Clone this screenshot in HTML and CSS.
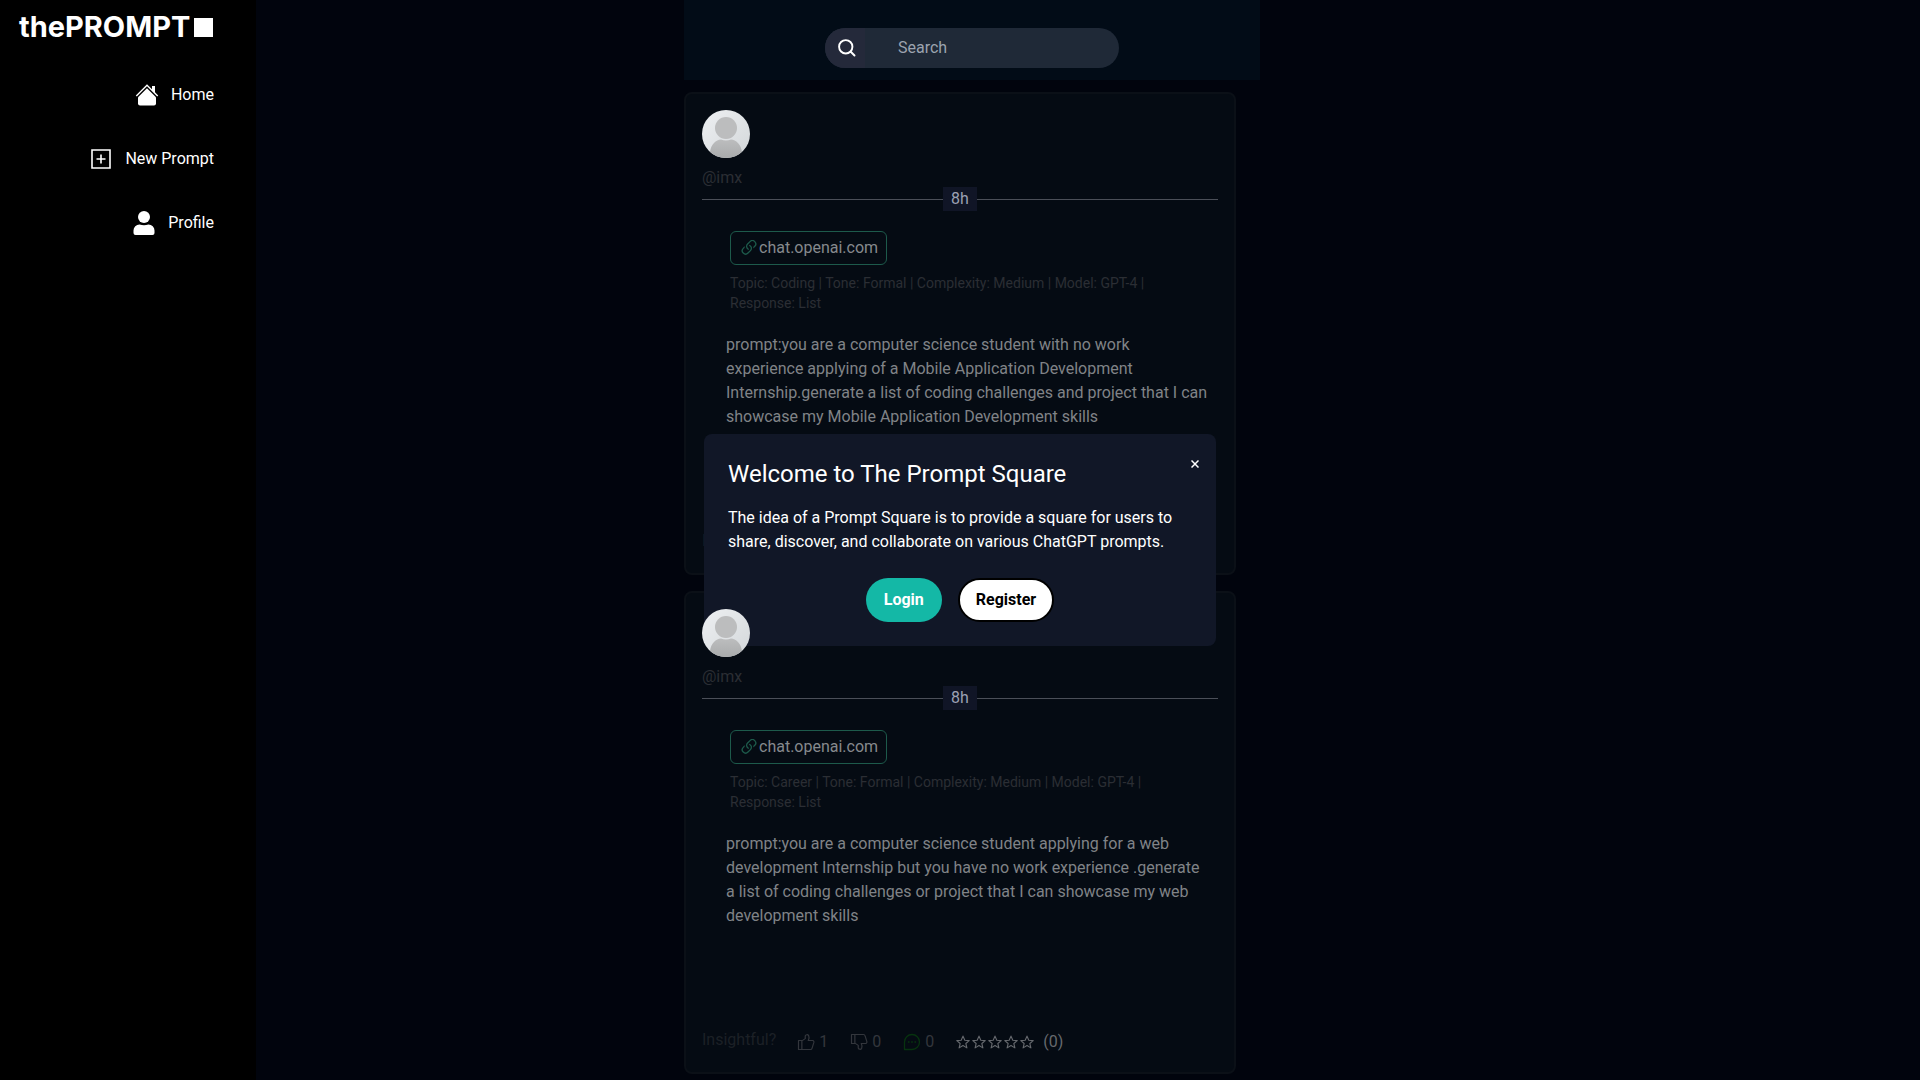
FILE: index.html
```html
<!DOCTYPE html>
<html lang="en">
<head>
<meta charset="utf-8">
<meta name="viewport" content="width=device-width, initial-scale=1">
<title>The Prompt Square</title>
<link rel="stylesheet" href="styles.css">
</head>
<body>
<svg class="sprite" aria-hidden="true">
  <symbol id="avatar" viewBox="0 0 48 48">
    <defs>
      <linearGradient id="avatar-bg" x1="0" y1="0" x2="1" y2="1"><stop offset="0" stop-color="#eef0f2"/><stop offset="1" stop-color="#d3d7da"/></linearGradient>
      <linearGradient id="avatar-fg" x1="0" y1="0" x2="0" y2="1"><stop offset="0" stop-color="#bcbdbe"/><stop offset="1" stop-color="#a9abac"/></linearGradient>
      <clipPath id="avatar-clip"><circle cx="24" cy="24" r="24"/></clipPath>
    </defs>
    <g clip-path="url(#avatar-clip)">
      <rect width="48" height="48" fill="url(#avatar-bg)"/>
      <circle cx="24" cy="18" r="11" fill="#bcbdbe"/>
      <path d="M8 48V42C9 34 14 30 19 29.500Q24 31.500 29 29.500C34 30 39 34 40 42V48Z" fill="url(#avatar-fg)"/>
    </g>
  </symbol>
  <symbol id="link" viewBox="2 2 12 12" fill="currentColor">
    <path d="M4.715 6.542 3.343 7.914a3 3 0 1 0 4.243 4.243l1.828-1.829A3 3 0 0 0 8.586 5.500L8 6.086a1.002 1.002 0 0 0-.154.199 2 2 0 0 1 .861 3.337L6.880 11.450a2 2 0 1 1-2.830-2.830l.793-.792a4.018 4.018 0 0 1-.128-1.287z"/><path d="M6.586 4.672A3 3 0 0 0 7.414 9.500l.775-.776a2 2 0 0 1-.896-3.346L9.120 3.550a2 2 0 1 1 2.830 2.830l-.793.792c.112.420.155.855.128 1.287l1.372-1.372a3 3 0 1 0-4.243-4.243L6.586 4.672z"/>
  </symbol>
  <symbol id="thumb" viewBox="0 0 24 24" fill="none" stroke="currentColor" stroke-width="1.600" stroke-linejoin="round">
    <path d="M2 10h4.500v12H2zM6.500 10.500L11 7.500V4a2.500 2.500 0 0 1 4.500-.5C16.500 5.500 16 8 15 10h6a2 2 0 0 1 1.500 2.500L20 20.500a2 2 0 0 1-2 1.500H6.500"/>
  </symbol>
  <symbol id="comment" viewBox="0 0 24 24" fill="none" stroke="currentColor" stroke-width="1.700" stroke-linejoin="round">
    <path d="M2 22V12A10 10 0 1 1 12 22Z"/><path d="M6.500 12h2.200M10.900 12h2.200M15.300 12h2.200" stroke-width="2.200"/>
  </symbol>
  <symbol id="star" viewBox="0 0 24 24" fill="none" stroke="currentColor" stroke-width="1.700" stroke-linejoin="round">
    <path d="M12 3.200l2.700 6.100 6.600.6-5 4.400 1.500 6.500-5.800-3.400-5.800 3.400 1.500-6.500-5-4.400 6.600-.6z"/>
  </symbol>
</svg>

<div class="layout">
  <aside class="sidebar">
    <a class="logo" href="#">thePROMPT<span class="logo-square"></span></a>
    <nav class="nav">
      <a class="nav-link" href="#">
        <svg class="nav-icon" viewBox="0 0 24 24" fill="#fff" aria-hidden="true"><path d="M12 1.300L.8 12.500l1 1L12 3.300l10.200 10.200 1-1L20 9.300V3h-3v3.300z"/><path d="M12 5.300l9 9V20.500A2 2 0 0 1 19 22.500H5a2 2 0 0 1-2-2V14.300z"/></svg>
        Home
      </a>
      <a class="nav-link" href="#">
        <svg class="nav-icon" viewBox="0 0 24 24" fill="none" stroke="#fff" stroke-width="1.600" aria-hidden="true"><path d="M3 3h18v18H3zM12 7.500v9M7.500 12h9"/></svg>
        New Prompt
      </a>
      <a class="nav-link" href="#">
        <svg class="nav-icon" viewBox="0 0 24 24" fill="#fff" aria-hidden="true"><circle cx="12" cy="6" r="6"/><path d="M1.500 22v-2.500a6 6 0 0 1 6-6q4.500 1.500 9 0a6 6 0 0 1 6 6V22a2 2 0 0 1-2 2h-17a2 2 0 0 1-2-2z"/></svg>
        Profile
      </a>
    </nav>
  </aside>

  <main class="feed">
    <header class="topbar">
      <form class="search" role="search">
        <button class="search-button" type="submit" aria-label="Search">
          <svg class="search-icon" viewBox="0 0 24 24" fill="none" stroke="#fff" stroke-width="2.300" stroke-linecap="round" aria-hidden="true"><circle cx="10.500" cy="10.500" r="8"/><path d="M16.500 16.500L21 21"/></svg>
        </button>
        <input class="search-input" type="search" placeholder="Search" aria-label="Search prompts">
      </form>
    </header>

    <article class="card">
      <svg class="avatar" aria-hidden="true"><use href="#avatar"/></svg>
      <a class="handle" href="#">@imx</a>
      <div class="divider"><time class="age">8h</time></div>
      <div class="details">
        <a class="source" href="#"><svg class="source-icon" aria-hidden="true"><use href="#link"/></svg>chat.openai.com</a>
        <p class="meta">Topic: Coding | Tone: Formal | Complexity: Medium | Model: GPT-4 | Response: List</p>
      </div>
      <p class="prompt">prompt:you are a computer science student with no work experience applying of a Mobile Application Development Internship.generate a list of coding challenges and project that I can showcase my Mobile Application Development skills</p>
      <footer class="actions">
        <span class="question">Insightful?</span>
        <button class="action" type="button" aria-label="Like"><svg class="action-icon" aria-hidden="true"><use href="#thumb"/></svg>1</button>
        <button class="action" type="button" aria-label="Dislike"><svg class="action-icon flipped" aria-hidden="true"><use href="#thumb"/></svg>0</button>
        <button class="action" type="button" aria-label="Comments"><svg class="action-icon comment" aria-hidden="true"><use href="#comment"/></svg>0</button>
        <div class="rating"><svg class="star"><use href="#star"/></svg><svg class="star"><use href="#star"/></svg><svg class="star"><use href="#star"/></svg><svg class="star"><use href="#star"/></svg><svg class="star"><use href="#star"/></svg><span class="votes">(0)</span></div>
      </footer>
    </article>

    <article class="card">
      <svg class="avatar" aria-hidden="true"><use href="#avatar"/></svg>
      <a class="handle" href="#">@imx</a>
      <div class="divider"><time class="age">8h</time></div>
      <div class="details">
        <a class="source" href="#"><svg class="source-icon" aria-hidden="true"><use href="#link"/></svg>chat.openai.com</a>
        <p class="meta">Topic: Career | Tone: Formal | Complexity: Medium | Model: GPT-4 | Response: List</p>
      </div>
      <p class="prompt">prompt:you are a computer science student applying for a web development Internship but you have no work experience .generate a list of coding challenges or project that I can showcase my web development skills</p>
      <footer class="actions">
        <span class="question">Insightful?</span>
        <button class="action" type="button" aria-label="Like"><svg class="action-icon" aria-hidden="true"><use href="#thumb"/></svg>1</button>
        <button class="action" type="button" aria-label="Dislike"><svg class="action-icon flipped" aria-hidden="true"><use href="#thumb"/></svg>0</button>
        <button class="action" type="button" aria-label="Comments"><svg class="action-icon comment" aria-hidden="true"><use href="#comment"/></svg>0</button>
        <div class="rating"><svg class="star"><use href="#star"/></svg><svg class="star"><use href="#star"/></svg><svg class="star"><use href="#star"/></svg><svg class="star"><use href="#star"/></svg><svg class="star"><use href="#star"/></svg><span class="votes">(0)</span></div>
      </footer>
    </article>
  </main>
</div>

<section class="modal" role="dialog" aria-labelledby="modal-title">
  <button class="modal-close" type="button" aria-label="Close"><svg class="close-icon" viewBox="0 0 8 8" stroke="#fff" stroke-width="1.500" aria-hidden="true"><path d="M.5.5l7 7M7.500.5l-7 7"/></svg></button>
  <h1 class="modal-title" id="modal-title">Welcome to The Prompt Square</h1>
  <p class="modal-text">The idea of a Prompt Square is to provide a square for users to share, discover, and collaborate on various ChatGPT prompts.</p>
  <div class="modal-buttons">
    <button class="button login" type="button">Login</button>
    <button class="button register" type="button">Register</button>
  </div>
</section>
</body>
</html>
```
FILE: styles.css
```css
* { box-sizing: border-box; }

body {
  margin: 0;
  background: #01040d;
  color: #fff;
  font: 16px/24px Roboto, "Liberation Sans", sans-serif;
}

a { color: inherit; text-decoration: none; }
p, h1 { margin: 0; }
button, input { font: inherit; color: inherit; border: 0; padding: 0; background: none; }
svg { flex: none; display: block; }
.sprite { position: absolute; width: 0; height: 0; }

.layout { display: flex; min-height: 100vh; }

.sidebar {
  flex: none;
  width: 256px;
  padding: 7px 42px 0 19px;
  background: #000;
}
.logo {
  display: flex;
  align-items: center;
  gap: 4px;
  font: 700 29px/40px Inter, sans-serif;
  white-space: nowrap;
}
.logo-square { flex: none; width: 19px; height: 19px; background: #fff; }
.nav {
  display: flex;
  flex-direction: column;
  align-items: flex-end;
  gap: 40px;
  margin-top: 36px;
}
.nav-link { display: flex; align-items: center; gap: 12px; }
.nav-icon { width: 24px; height: 24px; }

.feed {
  flex: 1;
  display: flex;
  flex-direction: column;
  gap: 16px;
  max-width: 576px;
  margin-left: 428px;
  padding-bottom: 6px;
}
.topbar {
  display: flex;
  justify-content: center;
  margin-bottom: -4px;
  padding: 28px 0 12px;
  background: #020c17;
}
.search {
  display: flex;
  width: 294px;
  height: 40px;
  border-radius: 20px;
  background: #1f2937;
  overflow: hidden;
}
.search-button { width: 40px; padding-left: 12px; background: #24293a; }
.search-icon { width: 20px; height: 20px; }
.search-input { flex: 1; min-width: 0; padding-left: 33px; outline: 0; }
.search-input::placeholder { color: #9ca3af; opacity: 1; }

.card {
  display: flex;
  flex-direction: column;
  align-items: flex-start;
  min-height: 483px;
  margin-right: 24px;
  padding: 16px;
  border: 2px solid #0b1017;
  border-radius: 8px;
  background: #050b13;
}
.avatar { position: relative; z-index: 3; width: 48px; height: 48px; }
.handle { margin-top: 8px; color: #2b2e34; }
.divider {
  display: flex;
  align-items: center;
  align-self: stretch;
  margin-top: -3px;
}
.divider::before, .divider::after { content: ""; flex: 1; height: 1px; background: #4b4f58; }
.age { padding: 0 8px; background: #101526; color: #9ca0b4; }
.details { padding: 20px 40px 0 28px; }
.source {
  display: inline-flex;
  align-items: center;
  gap: 2px;
  height: 34px;
  padding: 0 8px 0 10px;
  border: 1px solid #1d5a4b;
  border-radius: 6px;
  color: #86898d;
}
.source-icon { width: 16px; height: 16px; color: #1d5a4b; }
.meta { margin-top: 8px; color: #2b2e34; font-size: 14px; line-height: 20px; }
.prompt { padding: 20px 8px 0 24px; color: #808387; }
.actions {
  display: flex;
  align-items: flex-start;
  height: 28px;
  margin-top: auto;
}
.question { margin-right: 20px; color: #1c2026; }
.action {
  display: flex;
  align-items: center;
  gap: 3px;
  height: 28px;
  margin-right: 21px;
  color: #33363c;
}
.action-icon { width: 20px; height: 18px; }
.flipped { transform: rotate(180deg) scaleX(-1); }
.comment { color: #07330f; }
.rating { display: flex; align-items: center; height: 28px; color: #66696e; }
.star { width: 16px; height: 16px; }
.votes { margin-left: 8px; }

.modal {
  position: fixed;
  z-index: 2;
  top: 50%;
  left: 50%;
  transform: translate(-50%, -50%);
  width: 512px;
  max-width: 100%;
  padding: 24px;
  border-radius: 8px;
  background: #111727;
}
.modal-close { position: absolute; top: 18px; right: 9px; padding: 8px; }
.close-icon { width: 8px; height: 8px; }
.modal-title { font-size: 24px; font-weight: 400; line-height: 32px; }
.modal-text { margin-top: 16px; }
.modal-buttons { display: flex; justify-content: center; gap: 16px; margin-top: 24px; }
.button { height: 44px; border-radius: 22px; font-weight: 700; }
.login { padding: 0 18px; background: #14b8a6; }
.register { padding: 0 16px; border: 2px solid #000; background: #fff; color: #000; }
```
